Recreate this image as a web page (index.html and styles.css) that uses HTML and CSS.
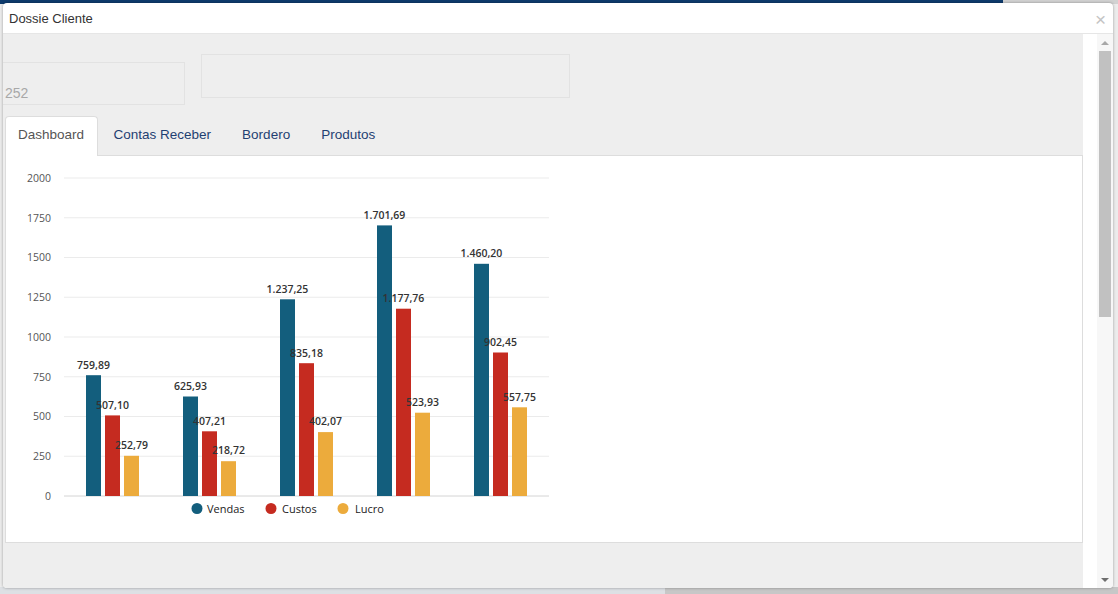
FILE: index.html
```html
<!DOCTYPE html>
<html lang="pt">
<head>
<meta charset="utf-8">
<title>Dossie Cliente</title>
<link rel="stylesheet" href="styles.css">
</head>
<body>
<div class="page">
  <div class="page-top"><div class="page-top-blue"></div><div class="page-top-rest"></div></div>
  <div class="page-fill"></div>
  <div class="page-bottom"><div class="page-bottom-left"></div><div class="page-bottom-rest"></div></div>
</div>

<div class="modal">
  <div class="modal-header">
    <span class="modal-title">Dossie Cliente</span>
    <span class="modal-close">×</span>
  </div>
  <div class="modal-body">
    <div class="content">
      <div class="fields">
        <div class="field field-a">252</div>
        <div class="field field-b"></div>
      </div>
      <ul class="tabs">
        <li class="tab tab-active">Dashboard</li>
        <li class="tab">Contas Receber</li>
        <li class="tab">Bordero</li>
        <li class="tab">Produtos</li>
      </ul>
      <div class="tab-panel">
        <svg class="chart" width="560" height="384" viewBox="6 156 560 384">
          <g class="grid">
            <line x1="64" x2="549" y1="178" y2="178"/>
            <line x1="64" x2="549" y1="217.75" y2="217.75"/>
            <line x1="64" x2="549" y1="257.5" y2="257.5"/>
            <line x1="64" x2="549" y1="297.25" y2="297.25"/>
            <line x1="64" x2="549" y1="337" y2="337"/>
            <line x1="64" x2="549" y1="376.75" y2="376.75"/>
            <line x1="64" x2="549" y1="416.5" y2="416.5"/>
            <line x1="64" x2="549" y1="456.25" y2="456.25"/>
          </g>
          <line class="axis" x1="64" x2="549" y1="496" y2="496"/>
          <g class="ylabels">
            <text x="51" y="181.8">2000</text>
            <text x="51" y="221.5">1750</text>
            <text x="51" y="261.3">1500</text>
            <text x="51" y="301">1250</text>
            <text x="51" y="340.8">1000</text>
            <text x="51" y="380.5">750</text>
            <text x="51" y="420.3">500</text>
            <text x="51" y="460">250</text>
            <text x="51" y="499.8">0</text>
          </g>
          <g class="bars">
            <rect class="v" x="86" y="375.2" width="15" height="120.8"/>
            <rect class="c" x="105" y="415.4" width="15" height="80.6"/>
            <rect class="l" x="124" y="455.8" width="15" height="40.2"/>

            <rect class="v" x="183" y="396.5" width="15" height="99.5"/>
            <rect class="c" x="202" y="431.3" width="15" height="64.7"/>
            <rect class="l" x="221" y="461.2" width="15" height="34.8"/>

            <rect class="v" x="280" y="299.3" width="15" height="196.7"/>
            <rect class="c" x="299" y="363.2" width="15" height="132.8"/>
            <rect class="l" x="318" y="432.1" width="15" height="63.9"/>

            <rect class="v" x="377" y="225.4" width="15" height="270.6"/>
            <rect class="c" x="396" y="308.7" width="15" height="187.3"/>
            <rect class="l" x="415" y="412.7" width="15" height="83.3"/>

            <rect class="v" x="474" y="263.8" width="15" height="232.2"/>
            <rect class="c" x="493" y="352.5" width="15" height="143.5"/>
            <rect class="l" x="512" y="407.3" width="15" height="88.7"/>
          </g>
          <g class="dlabels">
            <text x="93.5" y="368.5">759,89</text>
            <text x="112.5" y="408.5">507,10</text>
            <text x="131.5" y="449">252,79</text>

            <text x="190.5" y="389.5">625,93</text>
            <text x="209.5" y="424.5">407,21</text>
            <text x="228.5" y="454">218,72</text>

            <text x="287.5" y="292.5">1.237,25</text>
            <text x="306.5" y="356.5">835,18</text>
            <text x="325.5" y="425">402,07</text>

            <text x="384.5" y="218.5">1.701,69</text>
            <text x="403.5" y="302">1.177,76</text>
            <text x="422.5" y="406">523,93</text>

            <text x="481.5" y="257">1.460,20</text>
            <text x="500.5" y="345.5">902,45</text>
            <text x="519.5" y="400.5">557,75</text>
          </g>
          <g class="legend">
            <circle class="v" cx="197" cy="508.5" r="5.5"/>
            <text x="207" y="512.5">Vendas</text>
            <circle class="c" cx="271" cy="508.5" r="5.5"/>
            <text x="282" y="512.5">Custos</text>
            <circle class="l" cx="343" cy="508.5" r="5.5"/>
            <text x="355" y="512.5">Lucro</text>
          </g>
        </svg>
      </div>
    </div>
    <div class="gutter"></div>
    <div class="vscroll">
      <div class="vscroll-up"></div>
      <div class="vscroll-thumb"></div>
      <div class="vscroll-space"></div>
      <div class="vscroll-down"></div>
    </div>
  </div>
</div>
</body>
</html>
```

FILE: styles.css
```css
html, body {
  margin: 0;
  padding: 0;
}

body {
  width: 1118px;
  height: 594px;
  overflow: hidden;
  position: relative;
  background: #e9e9e9;
  font-family: Arial, "Liberation Sans", sans-serif;
}

/* background page peeking out */
.page {
  display: flex;
  flex-direction: column;
  height: 594px;
}
.page-top {
  display: flex;
  height: 4px;
}
.page-top-blue {
  width: 1003px;
  background: #0e3b6d;
}
.page-top-rest {
  flex: 1;
  background: #d2d2d2;
}
.page-fill {
  flex: 1;
  background: #ececec;
}
.page-bottom {
  display: flex;
  height: 7px;
}
.page-bottom-left {
  width: 665px;
  background: #dde0e4;
}
.page-bottom-rest {
  flex: 1;
  background: #c7c7c7;
}

/* modal window */
.modal {
  position: absolute;
  left: 3px;
  top: 3px;
  width: 1110px;
  height: 585px;
  background: #fff;
  border-radius: 4px;
  box-shadow: 0 0 3px rgba(0, 0, 0, 0.35);
  overflow: hidden;
  display: flex;
  flex-direction: column;
}

.modal-header {
  height: 30px;
  border-bottom: 1px solid #e6e6e6;
  display: flex;
  align-items: center;
  justify-content: space-between;
  padding: 0 7px 0 6px;
  flex-shrink: 0;
}
.modal-title {
  font-size: 13px;
  color: #333;
}
.modal-close {
  font-size: 19px;
  color: #c4c4c4;
  line-height: 1;
  margin-top: 3px;
}

.modal-body {
  flex: 1;
  display: flex;
  min-height: 0;
}

.content {
  width: 1080px;
  background: #eeeeee;
  overflow: hidden;
  flex-shrink: 0;
}

.gutter {
  width: 14px;
  background: #fff;
  flex-shrink: 0;
}

.vscroll {
  width: 16px;
  background: #f7f7f7;
  display: flex;
  flex-direction: column;
  align-items: center;
  flex-shrink: 0;
}
.vscroll-up {
  width: 0;
  height: 0;
  margin-top: 7px;
  border-left: 4px solid transparent;
  border-right: 4px solid transparent;
  border-bottom: 4px solid #a8a8a8;
}
.vscroll-thumb {
  margin-top: 6px;
  width: 12px;
  height: 266px;
  background: #c1c1c1;
}
.vscroll-space {
  flex: 1;
}
.vscroll-down {
  width: 0;
  height: 0;
  margin-bottom: 6px;
  border-left: 4px solid transparent;
  border-right: 4px solid transparent;
  border-top: 4px solid #6e6e6e;
}

/* fields */
.fields {
  display: flex;
  align-items: flex-start;
  gap: 16px;
  height: 82px;
  margin-left: -25px;
}
.field {
  box-sizing: border-box;
  border: 1px solid #e2e2e2;
  background: #eeeeee;
}
.field-a {
  width: 207px;
  height: 43px;
  margin-top: 28px;
  padding: 22px 0 0 26px;
  font-size: 14px;
  color: #a8a8a8;
  line-height: 16px;
}
.field-b {
  width: 369px;
  height: 44px;
  margin-top: 20px;
}

/* tabs */
.tabs {
  list-style: none;
  margin: 0 0 0 2px;
  padding: 0;
  display: flex;
  width: 1078px;
  box-sizing: border-box;
  border-bottom: 1px solid #dddddd;
  height: 40px;
}
.tab {
  padding: 9px 14.5px 0;
  font-size: 13.5px;
  line-height: 17px;
  color: #1f3f72;
  border: 1px solid transparent;
  border-bottom: none;
  border-radius: 4px 4px 0 0;
}
.tab-active {
  padding: 9px 13px 0 12px;
  background: #fff;
  border-color: #dddddd;
  color: #555;
  margin-bottom: -1px;
}

/* panel */
.tab-panel {
  margin-left: 2px;
  width: 1078px;
  height: 387px;
  box-sizing: border-box;
  background: #fff;
  border: 1px solid #dddddd;
  border-top: none;
}

.chart {
  display: block;
}
.grid line {
  stroke: #ebebeb;
  stroke-width: 1;
}
.axis {
  stroke: #d4d4d4;
  stroke-width: 1;
}
.ylabels text {
  font-family: "Open Sans", sans-serif;
  font-size: 10.5px;
  fill: #555;
  text-anchor: end;
}
.dlabels text {
  font-family: "Open Sans", sans-serif;
  font-size: 10.5px;
  font-weight: 600;
  fill: #333;
  text-anchor: middle;
}
.legend text {
  font-family: "Open Sans", sans-serif;
  font-size: 11px;
  fill: #222;
}
.v { fill: #135e7d; }
.c { fill: #c52b20; }
.l { fill: #ecab3c; }
```
